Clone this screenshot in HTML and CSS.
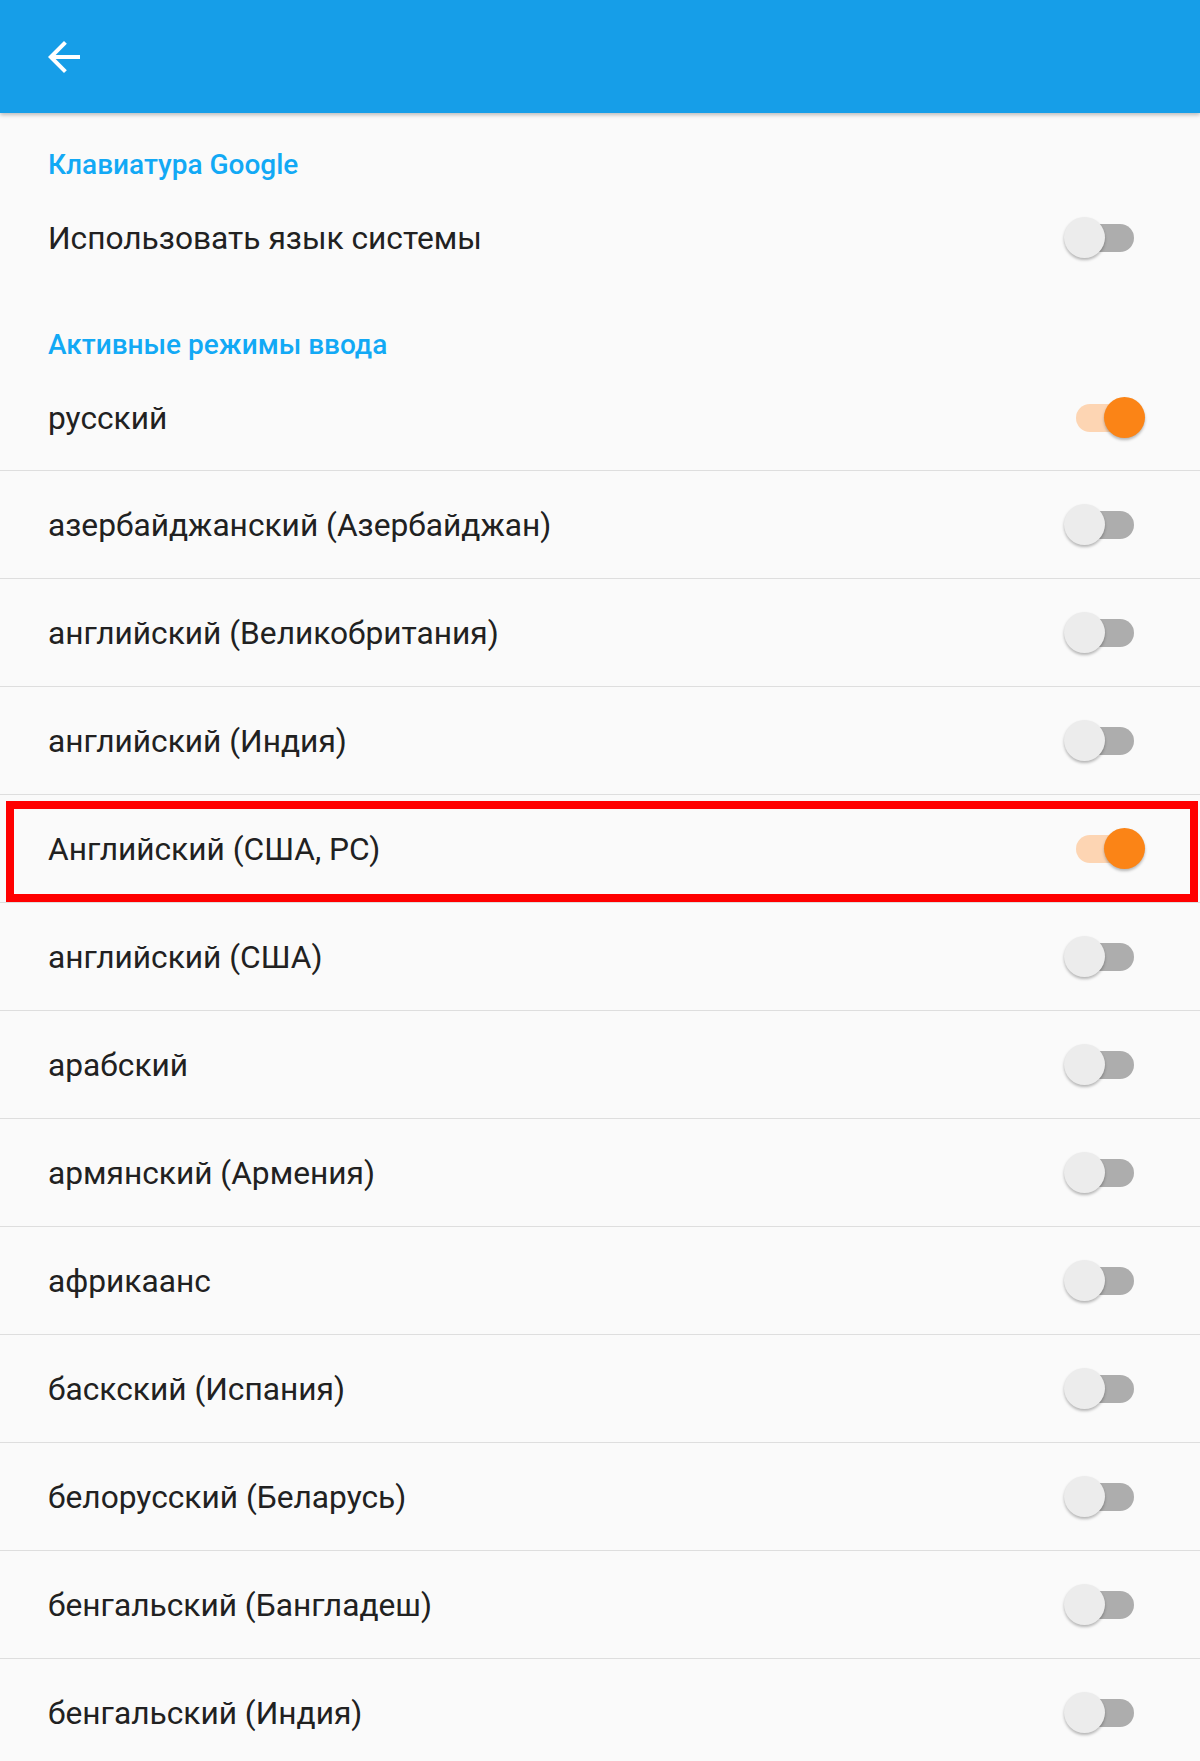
FILE: index.html
```html
<!DOCTYPE html>
<html lang="ru">
<head>
<meta charset="utf-8">
<link rel="stylesheet" href="styles.css">
</head>
<body>
<header class="appbar">
  <svg class="back" viewBox="0 0 24 24" width="48" height="48"><path d="M20 11H7.83l5.59-5.59L12 4l-8 8 8 8 1.41-1.41L7.83 13H20v-2z" fill="#fff"/></svg>
</header>
<main class="content">
  <div class="category first">Клавиатура Google</div>
  <div class="row plain"><span class="label">Использовать язык системы</span><span class="toggle"><span class="track"></span><span class="thumb"></span></span></div>
  <div class="category second">Активные режимы ввода</div>
  <div class="row top"><span class="label">русский</span><span class="toggle on"><span class="track"></span><span class="thumb"></span></span></div>
  <div class="row"><span class="label">азербайджанский (Азербайджан)</span><span class="toggle"><span class="track"></span><span class="thumb"></span></span></div>
  <div class="row"><span class="label">английский (Великобритания)</span><span class="toggle"><span class="track"></span><span class="thumb"></span></span></div>
  <div class="row"><span class="label">английский (Индия)</span><span class="toggle"><span class="track"></span><span class="thumb"></span></span></div>
  <div class="row highlighted"><span class="label">Английский (США, РС)</span><span class="toggle on"><span class="track"></span><span class="thumb"></span></span><span class="mark"></span></div>
  <div class="row"><span class="label">английский (США)</span><span class="toggle"><span class="track"></span><span class="thumb"></span></span></div>
  <div class="row"><span class="label">арабский</span><span class="toggle"><span class="track"></span><span class="thumb"></span></span></div>
  <div class="row"><span class="label">армянский (Армения)</span><span class="toggle"><span class="track"></span><span class="thumb"></span></span></div>
  <div class="row"><span class="label">африкаанс</span><span class="toggle"><span class="track"></span><span class="thumb"></span></span></div>
  <div class="row"><span class="label">баскский (Испания)</span><span class="toggle"><span class="track"></span><span class="thumb"></span></span></div>
  <div class="row"><span class="label">белорусский (Беларусь)</span><span class="toggle"><span class="track"></span><span class="thumb"></span></span></div>
  <div class="row"><span class="label">бенгальский (Бангладеш)</span><span class="toggle"><span class="track"></span><span class="thumb"></span></span></div>
  <div class="row"><span class="label">бенгальский (Индия)</span><span class="toggle"><span class="track"></span><span class="thumb"></span></span></div>
</main>
</body>
</html>
```
FILE: styles.css
```css
html, body {
  margin: 0;
  padding: 0;
  background: #fafafa;
}
body {
  font-family: Roboto, "Noto Sans", sans-serif;
  color: #212121;
  overflow: hidden;
  height: 1761px;
}
.appbar {
  height: 113px;
  background: #169ee8;
  box-shadow: 0 2px 4px rgba(0, 0, 0, 0.25);
  display: flex;
  align-items: center;
  padding-left: 40px;
  position: relative;
  z-index: 2;
}
.back {
  display: block;
  margin-top: 1px;
}
.content {
  display: flex;
  flex-direction: column;
}
.category {
  padding-left: 48px;
  font-size: 28px;
  font-weight: 500;
  line-height: 40px;
  color: #12a9f5;
}
.category.first {
  padding-top: 32px;
}
.category.second {
  padding-top: 35px;
}
.row {
  height: 107px;
  border-bottom: 1px solid #dedede;
  display: flex;
  align-items: center;
  justify-content: space-between;
  padding: 0 55px 0 48px;
  position: relative;
}
.row.plain {
  height: 105px;
  border-bottom: none;
}
.row.top {
  height: 105px;
}
.label {
  font-size: 31.7px;
  line-height: 40px;
  padding-top: 2px;
}
.toggle {
  position: relative;
  width: 81px;
  height: 41px;
  flex: none;
}
.track {
  position: absolute;
  left: 12px;
  top: 6.5px;
  width: 58px;
  height: 28px;
  border-radius: 14px;
  background: #adadad;
}
.thumb {
  position: absolute;
  left: 0;
  top: 0;
  width: 41px;
  height: 41px;
  border-radius: 50%;
  background: #ececec;
  box-shadow: 0 2px 3px rgba(0, 0, 0, 0.28);
}
.toggle.on .track {
  background: #fdd5b3;
}
.toggle.on .thumb {
  left: 40px;
  background: #fb8416;
}
.mark {
  position: absolute;
  left: 6px;
  right: 2px;
  top: 6px;
  bottom: 0;
  border: 8px solid #ff0000;
}
```
